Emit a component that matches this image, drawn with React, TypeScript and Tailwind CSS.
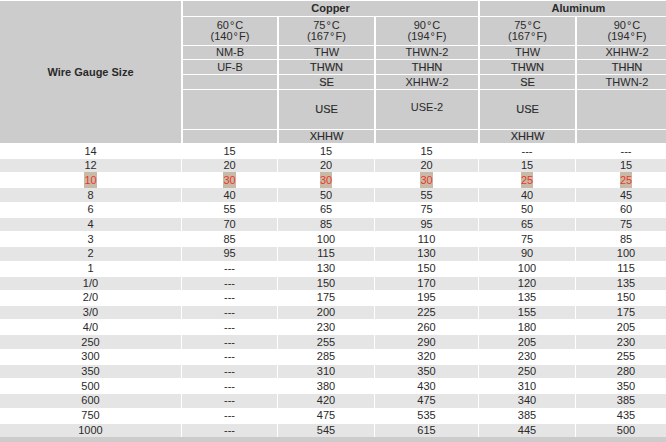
import React from "react";

const Deg = () => <span className="mx-[1px]">°</span>;

const rows: string[][] = [
  ["14", "15", "15", "15", "---", "---"],
  ["12", "20", "20", "20", "15", "15"],
  ["10", "30", "30", "30", "25", "25"],
  ["8", "40", "50", "55", "40", "45"],
  ["6", "55", "65", "75", "50", "60"],
  ["4", "70", "85", "95", "65", "75"],
  ["3", "85", "100", "110", "75", "85"],
  ["2", "95", "115", "130", "90", "100"],
  ["1", "---", "130", "150", "100", "115"],
  ["1/0", "---", "150", "170", "120", "135"],
  ["2/0", "---", "175", "195", "135", "150"],
  ["3/0", "---", "200", "225", "155", "175"],
  ["4/0", "---", "230", "260", "180", "205"],
  ["250", "---", "255", "290", "205", "230"],
  ["300", "---", "285", "320", "230", "255"],
  ["350", "---", "310", "350", "250", "280"],
  ["500", "---", "380", "430", "310", "350"],
  ["600", "---", "420", "475", "340", "385"],
  ["750", "---", "475", "535", "385", "435"],
  ["1000", "---", "545", "615", "445", "500"],
];

const H = ({ children, className = "" }: { children?: React.ReactNode; className?: string }) => (
  <div className={`bg-[#cccccc] flex items-center justify-center leading-none ${className}`}>{children}</div>
);

const heavy = "[-webkit-text-stroke:0.15px_#2a2a2a]";

export default function App() {
  return (
    <div
      className="w-[666px] h-[442px] overflow-hidden bg-white text-[11px] text-[#2a2a2a]"
      style={{ fontFamily: '"Liberation Sans", Arial, sans-serif' }}
    >
      <div className="w-[677px] pt-px">
        {/* header */}
        <div className="grid grid-cols-[181px_94px_95px_102px_95px_100px] grid-rows-[15px_28px_13px_14px_14px_39px_13px] gap-x-[2px] gap-y-px bg-white">
          <H className="row-start-1 row-end-8 col-start-1 font-bold">Wire Gauge Size</H>
          <H className="col-start-2 col-end-5 font-bold">Copper</H>
          <H className="col-start-5 col-end-7 font-bold">Aluminum</H>

          <H className="flex-col leading-[14px]">
            <span>60<Deg />C</span>
            <span>(140<Deg />F)</span>
          </H>
          <H className="flex-col leading-[14px]">
            <span>75<Deg />C</span>
            <span>(167<Deg />F)</span>
          </H>
          <H className="flex-col leading-[14px]">
            <span>90<Deg />C</span>
            <span>(194<Deg />F)</span>
          </H>
          <H className="flex-col leading-[14px]">
            <span>75<Deg />C</span>
            <span>(167<Deg />F)</span>
          </H>
          <H className="flex-col leading-[14px]">
            <span>90<Deg />C</span>
            <span>(194<Deg />F)</span>
          </H>

          <H>NM-B</H>
          <H>THW</H>
          <H>THWN-2</H>
          <H>THW</H>
          <H>XHHW-2</H>

          <H>UF-B</H>
          <H className={heavy}>THWN</H>
          <H className={heavy}>THHN</H>
          <H className={heavy}>THWN</H>
          <H className={heavy}>THHN</H>

          <H />
          <H className={heavy}>SE</H>
          <H>XHHW-2</H>
          <H className={heavy}>SE</H>
          <H>THWN-2</H>

          <H />
          <H className={heavy}>USE</H>
          <H className="pb-[5px]">USE-2</H>
          <H className={heavy}>USE</H>
          <H />

          <H />
          <H className={heavy}>XHHW</H>
          <H />
          <H className={heavy}>XHHW</H>
          <H />
        </div>

        {/* body */}
        <div className="flex flex-col">
          {rows.map((r, i) => {
            const grey = i % 2 === 1;
            const hl = r[0] === "10";
            return (
              <div
                key={i}
                className={`grid grid-cols-[181px_95px_96px_103px_96px_100px] gap-x-px bg-white ${
                  grey ? "h-[13.4px]" : "h-[16px]"
                }`}
              >
                {r.map((c, j) => (
                  <div
                    key={j}
                    className={`flex items-center justify-center leading-none ${grey ? "bg-[#e5e5e5]" : "bg-white"}`}
                  >
                    {hl ? (
                      <span className="bg-[#c9b9a7] text-[#e8392b] h-[16px] flex items-center">{c}</span>
                    ) : (
                      c
                    )}
                  </div>
                ))}
              </div>
            );
          })}
        </div>
        <div className="h-[6px] bg-[#cccccc]" />
      </div>
    </div>
  );
}
